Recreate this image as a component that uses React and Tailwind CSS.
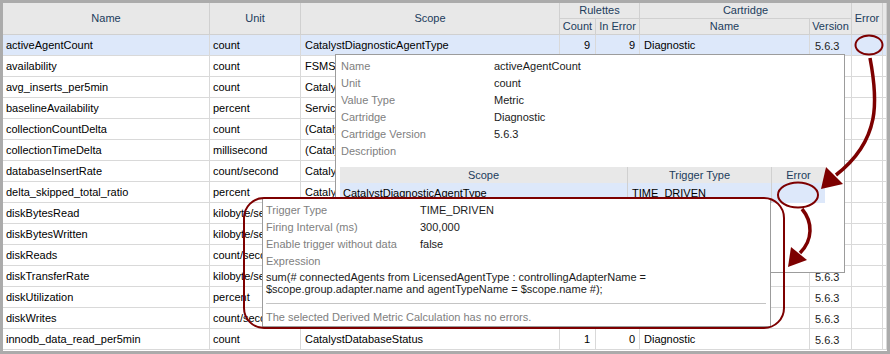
import React from "react";

// metric rows of the main grid (cells hidden under the popups are left blank)
const rows = [
  ["activeAgentCount", "count", "CatalystDiagnosticAgentType", "9", "9", "Diagnostic", "5.6.3"],
  ["availability", "count", "FSMServiceAvailability", "", "", "", ""],
  ["avg_inserts_per5min", "count", "CatalystDatabaseStatus", "", "", "", ""],
  ["baselineAvailability", "percent", "ServiceBaselineStatus", "", "", "", ""],
  ["collectionCountDelta", "count", "(CatalystDiagnosticAgentType)", "", "", "", ""],
  ["collectionTimeDelta", "millisecond", "(CatalystDiagnosticAgentType)", "", "", "", ""],
  ["databaseInsertRate", "count/second", "CatalystDatabaseStatus", "", "", "", ""],
  ["delta_skipped_total_ratio", "percent", "CatalystDiagnosticAgentType", "", "", "", ""],
  ["diskBytesRead", "kilobyte/second", "", "", "", "", ""],
  ["diskBytesWritten", "kilobyte/second", "", "", "", "", ""],
  ["diskReads", "count/second", "", "", "", "", ""],
  ["diskTransferRate", "kilobyte/second", "", "", "", "", "5.6.3"],
  ["diskUtilization", "percent", "", "", "", "", "5.6.3"],
  ["diskWrites", "count/second", "", "", "", "", "5.6.3"],
  ["innodb_data_read_per5min", "count", "CatalystDatabaseStatus", "1", "0", "Diagnostic", "5.6.3"],
];

const cols = "grid grid-cols-[207px_91px_259px_36px_44px_170px_42px_31px_4px]";
const head = "flex items-center justify-center bg-[#e8e8e8] border-r border-b border-[#d0d0d0] text-[#213c5c]";
const cell = "flex items-center border-r border-b border-[#d9d9d9] whitespace-nowrap overflow-hidden";

function Annotations() {
  return (
    <svg className="absolute left-0 top-0 pointer-events-none" width="890" height="354" viewBox="0 0 890 354">
      <g fill="none" stroke="#7d0000">
        <ellipse cx="869" cy="45" rx="13.5" ry="9.5" strokeWidth="2" />
        <ellipse cx="798" cy="195" rx="20" ry="12.5" strokeWidth="2" />
        <rect x="244" y="198" width="540" height="130" rx="20" strokeWidth="2" />
        <path d="M870 58 C878 100 881 140 836 175" strokeWidth="3.5" />
        <path d="M802 209 C813 222 813 240 800 253" strokeWidth="3.5" />
      </g>
      <polygon points="821,189 826,167 843,184" fill="#7d0000" />
      <polygon points="788,267 791,247 807,260" fill="#7d0000" />
    </svg>
  );
}

export default function App() {
  return (
    <div className="relative w-[890px] h-[354px] overflow-hidden text-[11px] font-['Liberation_Sans',Arial,sans-serif]">
      <div className="w-full h-full border-[3px] border-[#ababab] bg-white">
        {/* header */}
        <div className={`${cols} grid-rows-[16px_16px]`}>
          <div className={`${head} row-span-2`}>Name</div>
          <div className={`${head} row-span-2`}>Unit</div>
          <div className={`${head} row-span-2`}>Scope</div>
          <div className={`${head} col-span-2`}>Rulettes</div>
          <div className={`${head} col-span-2`}>Cartridge</div>
          <div className={`${head} row-span-2`}>Error</div>
          <div className={`${head} row-span-2`}></div>
          <div className={head}>Count</div>
          <div className={head}>In Error</div>
          <div className={head}>Name</div>
          <div className={head}>Version</div>
        </div>

        {/* body */}
        {rows.map((r, i) => (
          <div key={r[0]} className={`${cols} h-[21px] text-black ${i === 0 ? "bg-[#dde8fa]" : ""}`}>
            <div className={`${cell} pl-[3px]`}>{r[0]}</div>
            <div className={`${cell} pl-[3px]`}>{r[1]}</div>
            <div className={`${cell} pl-[4px]`}>{r[2]}</div>
            <div className={`${cell} justify-end pr-[5px]`}>{r[3]}</div>
            <div className={`${cell} justify-end pr-[4px]`}>{r[4]}</div>
            <div className={`${cell} pl-[4px]`}>{r[5]}</div>
            <div className={`${cell} pl-[5px] pt-[3px] text-[#222]`}>{r[6]}</div>
            <div className={cell}></div>
            <div className={cell}></div>
          </div>
        ))}
      </div>

      {/* metric details popup */}
      <div className="absolute left-[335px] top-[54px] w-[510px] h-[219px] border border-[#9c9c9c] bg-white pl-[4px] pt-[3px]">
        <div className="grid grid-cols-[154px_1fr] leading-[17px]">
          {[
            ["Name", "activeAgentCount"],
            ["Unit", "count"],
            ["Value Type", "Metric"],
            ["Cartridge", "Diagnostic"],
            ["Cartridge Version", "5.6.3"],
            ["Description", ""],
          ].map(([k, v]) => (
            <React.Fragment key={k}>
              <div className="pl-[1px] h-[17px] text-[#808080]">{k}</div>
              <div className="h-[17px] text-[#1b1b1b]">{v}</div>
            </React.Fragment>
          ))}
        </div>
        <div className="mt-[7px] w-[485px] grid grid-cols-[288px_144px_53px]">
          <div className="h-[16px] flex items-center justify-center bg-[#e8e8e8] border-r border-[#d0d0d0] text-[#213c5c]">Scope</div>
          <div className="h-[16px] flex items-center justify-center bg-[#e8e8e8] border-r border-[#d0d0d0] text-[#213c5c]">Trigger Type</div>
          <div className="h-[16px] flex items-center justify-center bg-[#e8e8e8] text-[#213c5c]">Error</div>
          <div className="h-[20px] flex items-center pl-[3px] bg-[#dde8fa] border-r border-[#d0d0d0]">CatalystDiagnosticAgentType</div>
          <div className="h-[20px] flex items-center pl-[4px] bg-[#dde8fa] border-r border-[#d0d0d0]">TIME_DRIVEN</div>
          <div className="h-[20px] bg-[#dde8fa]"></div>
        </div>
      </div>

      {/* error tooltip */}
      <div className="absolute left-[262px] top-[198px] w-[509px] h-[129px] border border-[#9c9c9c] bg-white pl-[3px] pr-[4px] pt-[3px]">
        <div className="grid grid-cols-[154px_1fr] leading-[17px]">
          {[
            ["Trigger Type", "TIME_DRIVEN"],
            ["Firing Interval (ms)", "300,000"],
            ["Enable trigger without data", "false"],
            ["Expression", ""],
          ].map(([k, v]) => (
            <React.Fragment key={k}>
              <div className="h-[17px] text-[#808080]">{k}</div>
              <div className="h-[17px] text-[#1b1b1b]">{v}</div>
            </React.Fragment>
          ))}
        </div>
        <div className="mt-[1px] leading-[12px] text-[#1b1b1b]">
          sum(# connectedAgents from LicensedAgentType : controllingAdapterName =
          <br />
          $scope.group.adapter.name and agentTypeName = $scope.name #);
        </div>
        <div className="mt-[8px] border-t border-[#c4c4c4] pt-[6px] leading-[14px] text-[#808080]">
          The selected Derived Metric Calculation has no errors.
        </div>
      </div>

      <Annotations />
    </div>
  );
}
